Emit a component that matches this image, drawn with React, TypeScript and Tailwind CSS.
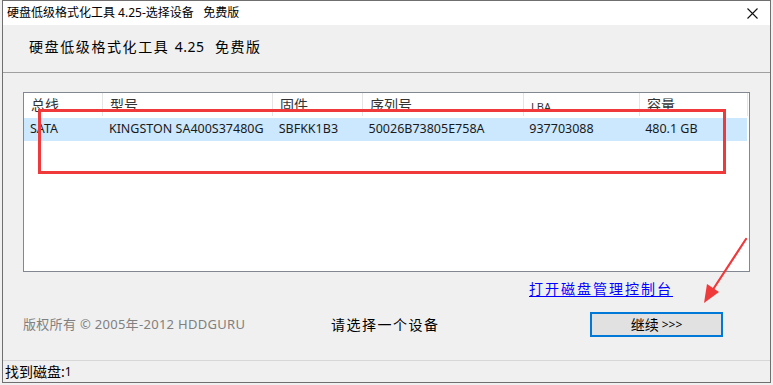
// Disk low-level format tool — device picker dialog.

const FONT = { fontFamily: '"Noto Sans", "Noto Sans CJK SC", sans-serif' };

const COLUMNS = [
  { label: '总线', w: 'w-[79px]' },
  { label: '型号', w: 'w-[170px]' },
  { label: '固件', w: 'w-[90px]' },
  { label: '序列号', w: 'w-[161px]' },
  { label: 'LBA', w: 'w-[116px]' },
  { label: '容量', w: 'w-[108px]' },
];

const ROW = ['SATA', 'KINGSTON SA400S37480G', 'SBFKK1B3', '50026B73805E758A', '937703088', '480.1 GB'];

export default function App() {
  return (
    <div className="relative h-[385px] w-[773px] overflow-hidden bg-[#f0f0f0] text-[#1a1a1a]" style={FONT}>
      <div className="ml-[2px] flex h-[383px] w-[769px] flex-col border border-[#6f6f6f] bg-[#f0f0f0]">
        {/* title bar */}
        <div className="flex h-[24px] items-center justify-between bg-white pl-[4px] pr-[12px]">
          <span className="text-[12px] text-black">硬盘低级格式化工具 4.25-选择设备&nbsp;&nbsp;&nbsp;免费版</span>
          <svg width="11" height="11" viewBox="0 0 11 11" className="mt-[1px]">
            <path d="M0.5 0.5L10.5 10.5M10.5 0.5L0.5 10.5" stroke="#111" strokeWidth="1.1" />
          </svg>
        </div>

        {/* heading */}
        <div className="flex h-[47px] items-center pl-[26px] pb-[4px]">
          <span className="text-[14px] tracking-[1.6px] text-black">硬盘低级格式化工具 <span className="tracking-[0.5px]">4.25</span>&nbsp;&nbsp;免费版</span>
        </div>
        <div className="h-px bg-[#a0a0a0]" />

        {/* device list */}
        <div className="ml-[20px] mt-[19px] h-[181px] w-[727px] border border-[#828790] bg-white">
          <div className="flex h-[23px]">
            {COLUMNS.map((c) => (
              <div key={c.label} className={`${c.w} flex h-full items-center border-r border-[#e5e5e5] pl-[7px] text-[14px] text-[#333]`}>
                <span className={c.label === 'LBA' ? 'mt-[6px] text-[11px]' : ''}>{c.label}</span>
              </div>
            ))}
          </div>
          <div className="mt-[2px] flex h-[23px] w-[723px] items-center bg-[#cce8ff]">
            {COLUMNS.map((c, i) => (
              <div key={c.label} className={`${c.w} pl-[6px] text-[12.5px] text-[#1a1a1a]`}>{ROW[i]}</div>
            ))}
          </div>
        </div>

        {/* footer */}
        <div className="flex h-[27px] items-end justify-end pr-[97px]">
          <span className="text-[14px] tracking-[2px] text-[#0000ff] underline underline-offset-2">打开磁盘管理控制台</span>
        </div>
        <div className="mt-[13px] flex h-[25px] items-center">
          <span className="ml-[20px] w-[308px] shrink-0 text-[13px] tracking-[0.3px] text-[#808080]">版权所有 © 2005年-2012 HDDGURU</span>
          <span className="w-[259px] shrink-0 text-[14px] tracking-[1.5px] text-black">请选择一个设备</span>
          <div className="flex h-[25px] w-[133px] shrink-0 items-center justify-center border-2 border-[#0078d7] bg-[#e1e1e1] text-[14px] text-black">
            继续 <span className="ml-[3px] text-[12px]">&gt;&gt;&gt;</span>
          </div>
        </div>

        <div className="mt-[23px] h-px bg-[#d7d7d7]" />
        <div className="flex flex-1 items-center pl-[2px] text-[14px] text-black">
          找到磁盘:<span className="text-[12px]">1</span>
        </div>
      </div>

      {/* annotations */}
      <div className="absolute left-[38px] top-[109px] h-[65px] w-[688px] border-[3px] border-[#f0393b]" />
      <svg className="absolute left-[698px] top-[236px]" width="52" height="72" viewBox="0 0 52 72">
        <path d="M48 3L14 55" stroke="#f0393b" strokeWidth="2.2" strokeLinecap="round" />
        <path d="M6 67L9 48L21 56Z" fill="#f0393b" />
      </svg>
    </div>
  );
}
